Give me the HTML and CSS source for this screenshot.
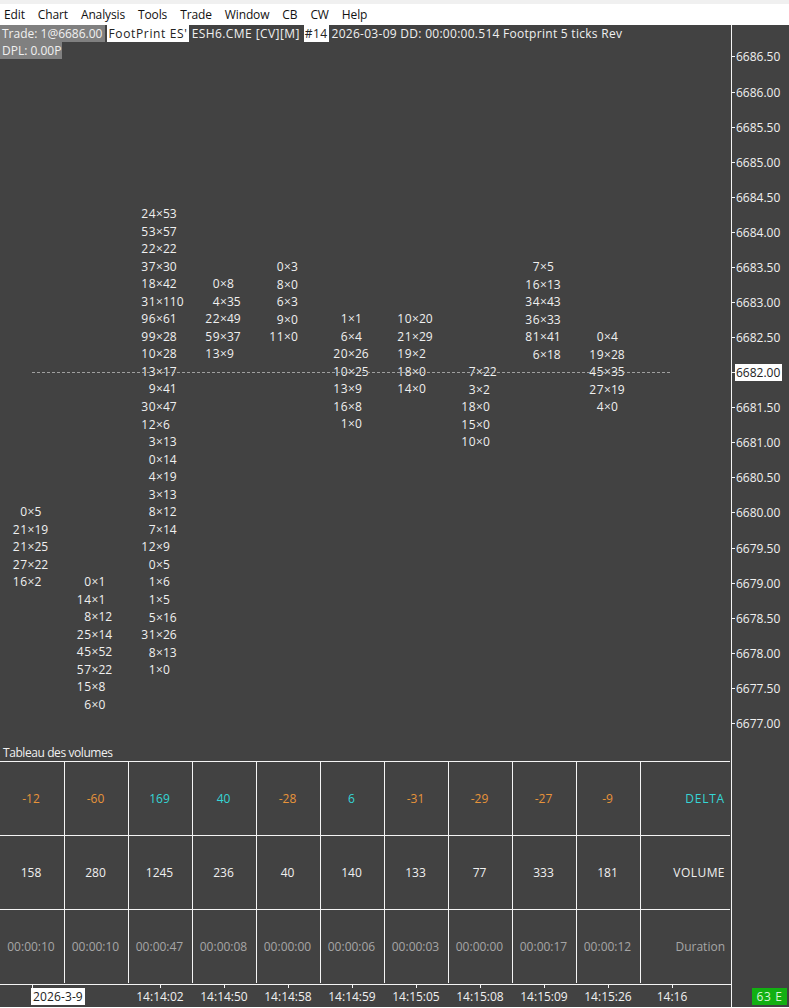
FILE: index.html
```html
<!DOCTYPE html>
<html lang="en">
<head>
<meta charset="utf-8">
<title>FootPrint ES</title>
<link rel="stylesheet" href="styles.css">
</head>
<body>
<header class="menubar">
  <span>Edit</span><span>Chart</span><span>Analysis</span><span>Tools</span><span>Trade</span><span>Window</span><span>CB</span><span>CW</span><span>Help</span>
</header>
<main class="workspace">
  <section class="plot">
    <div class="info">
      <div class="info-line">
        <span class="tag-gray">Trade: 1@6686.00</span>
        <span class="tag-white">FootPrint ES'</span>
        <span class="symbol">ESH6.CME [CV][M]</span>
        <span class="tag-white tag-num">#14</span>
        <span class="details">2026-03-09 DD: 00:00:00.514 Footprint 5 ticks Rev</span>
      </div>
      <div class="info-line"><span class="tag-gray tag-dpl">DPL: 0.00P</span></div>
    </div>
    <div class="last-price"></div>
    <div class="columns">
      <div class="col">
        <p><i>0</i>×<b>5</b></p><p><i>21</i>×<b>19</b></p><p><i>21</i>×<b>25</b></p><p><i>27</i>×<b>22</b></p><p><i>16</i>×<b>2</b></p>
      </div>
      <div class="col">
        <p><i>0</i>×<b>1</b></p><p><i>14</i>×<b>1</b></p><p><i>8</i>×<b>12</b></p><p><i>25</i>×<b>14</b></p><p><i>45</i>×<b>52</b></p><p><i>57</i>×<b>22</b></p><p><i>15</i>×<b>8</b></p><p><i>6</i>×<b>0</b></p>
      </div>
      <div class="col">
        <p><i>24</i>×<b>53</b></p><p><i>53</i>×<b>57</b></p><p><i>22</i>×<b>22</b></p><p><i>37</i>×<b>30</b></p><p><i>18</i>×<b>42</b></p><p><i>31</i>×<b>110</b></p><p><i>96</i>×<b>61</b></p><p><i>99</i>×<b>28</b></p><p><i>10</i>×<b>28</b></p><p><i>13</i>×<b>17</b></p><p><i>9</i>×<b>41</b></p><p><i>30</i>×<b>47</b></p><p><i>12</i>×<b>6</b></p><p><i>3</i>×<b>13</b></p><p><i>0</i>×<b>14</b></p><p><i>4</i>×<b>19</b></p><p><i>3</i>×<b>13</b></p><p><i>8</i>×<b>12</b></p><p><i>7</i>×<b>14</b></p><p><i>12</i>×<b>9</b></p><p><i>0</i>×<b>5</b></p><p><i>1</i>×<b>6</b></p><p><i>1</i>×<b>5</b></p><p><i>5</i>×<b>16</b></p><p><i>31</i>×<b>26</b></p><p><i>8</i>×<b>13</b></p><p><i>1</i>×<b>0</b></p>
      </div>
      <div class="col">
        <p><i>0</i>×<b>8</b></p><p><i>4</i>×<b>35</b></p><p><i>22</i>×<b>49</b></p><p><i>59</i>×<b>37</b></p><p><i>13</i>×<b>9</b></p>
      </div>
      <div class="col">
        <p><i>0</i>×<b>3</b></p><p><i>8</i>×<b>0</b></p><p><i>6</i>×<b>3</b></p><p><i>9</i>×<b>0</b></p><p><i>11</i>×<b>0</b></p>
      </div>
      <div class="col">
        <p><i>1</i>×<b>1</b></p><p><i>6</i>×<b>4</b></p><p><i>20</i>×<b>26</b></p><p><i>10</i>×<b>25</b></p><p><i>13</i>×<b>9</b></p><p><i>16</i>×<b>8</b></p><p><i>1</i>×<b>0</b></p>
      </div>
      <div class="col">
        <p><i>10</i>×<b>20</b></p><p><i>21</i>×<b>29</b></p><p><i>19</i>×<b>2</b></p><p><i>18</i>×<b>0</b></p><p><i>14</i>×<b>0</b></p>
      </div>
      <div class="col">
        <p><i>7</i>×<b>22</b></p><p><i>3</i>×<b>2</b></p><p><i>18</i>×<b>0</b></p><p><i>15</i>×<b>0</b></p><p><i>10</i>×<b>0</b></p>
      </div>
      <div class="col">
        <p><i>7</i>×<b>5</b></p><p><i>16</i>×<b>13</b></p><p><i>34</i>×<b>43</b></p><p><i>36</i>×<b>33</b></p><p><i>81</i>×<b>41</b></p><p><i>6</i>×<b>18</b></p>
      </div>
      <div class="col">
        <p><i>0</i>×<b>4</b></p><p><i>19</i>×<b>28</b></p><p><i>45</i>×<b>35</b></p><p><i>27</i>×<b>19</b></p><p><i>4</i>×<b>0</b></p>
      </div>
    </div>
    <div class="table-title">Tableau des volumes</div>
    <div class="vol-table">
      <div class="vrow delta">
        <span class="neg">-12</span><span class="neg">-60</span><span>169</span><span>40</span><span class="neg">-28</span><span>6</span><span class="neg">-31</span><span class="neg">-29</span><span class="neg">-27</span><span class="neg">-9</span><span class="name">DELTA</span>
      </div>
      <div class="vrow volume">
        <span>158</span><span>280</span><span>1245</span><span>236</span><span>40</span><span>140</span><span>133</span><span>77</span><span>333</span><span>181</span><span class="name">VOLUME</span>
      </div>
      <div class="vrow duration">
        <span>00:00:10</span><span>00:00:10</span><span>00:00:47</span><span>00:00:08</span><span>00:00:00</span><span>00:00:06</span><span>00:00:03</span><span>00:00:00</span><span>00:00:17</span><span>00:00:12</span><span class="name">Duration</span>
      </div>
    </div>
    <div class="time-axis">
      <span class="date"><em>2026-3-9</em></span><span class="no-tick"></span><span>14:14:02</span><span>14:14:50</span><span>14:14:58</span><span>14:14:59</span><span>14:15:05</span><span>14:15:08</span><span>14:15:09</span><span>14:15:26</span><span>14:16</span>
    </div>
  </section>
  <aside class="price-axis">
    <div class="prices">
      <span>6686.50</span><span>6686.00</span><span>6685.50</span><span>6685.00</span><span>6684.50</span><span>6684.00</span><span>6683.50</span><span>6683.00</span><span>6682.50</span><span><em>6682.00</em></span><span>6681.50</span><span>6681.00</span><span>6680.50</span><span>6680.00</span><span>6679.50</span><span>6679.00</span><span>6678.50</span><span>6678.00</span><span>6677.50</span><span>6677.00</span>
    </div>
    <div class="status"><span>63 E</span></div>
  </aside>
</main>
</body>
</html>
```
FILE: styles.css
```css
* { box-sizing: border-box; margin: 0; padding: 0; }
html, body { width: 789px; height: 1008px; overflow: hidden; }
body {
  display: flex;
  flex-direction: column;
  background: #fff;
  color: #f0f0f0;
  font-family: "Open Sans", "Noto Sans", sans-serif;
  font-size: 12px;
}
.menubar {
  flex: none;
  height: 25px;
  padding: 8px 0 0 4px;
  display: flex;
  gap: 13px;
  background: linear-gradient(#f0f0f0 4px, #fff 4px);
  color: #111;
  line-height: 14px;
  letter-spacing: -0.13px;
}
.workspace {
  flex: none;
  height: 982px;
  display: grid;
  grid-template-columns: 732px 57px;
  background: #424242;
}
.plot {
  position: relative;
  display: flex;
  flex-direction: column;
  border-right: 1px solid #f4f4f4;
}
.info { position: absolute; left: 0; top: 0; line-height: 17px; }
.info-line { display: flex; gap: 3px; height: 17px; white-space: nowrap; }
.tag-gray { background: #808080; padding: 0 3px 0 2px; margin-right: -1px; }
.tag-dpl { padding-right: 1px; }
.tag-white { background: #fff; color: #222; padding: 0 1px; letter-spacing: 0.65px; }
.tag-num { letter-spacing: 0.4px; margin-left: 1px; }
.symbol { letter-spacing: 0.42px; }
.details { letter-spacing: 0.28px; }
.last-price {
  position: absolute;
  left: 32px;
  top: 347px;
  width: 638px;
  border-top: 1px dashed #a0a0a0;
}
.columns { flex: none; height: 719px; display: flex; }
.col { flex: none; width: 64px; line-height: 17.55px; }
.col p { display: grid; grid-template-columns: 1fr auto 1fr; padding-right: 1px; }
.col i { font-style: normal; text-align: right; letter-spacing: 0.5px; }
.col b { font-weight: normal; text-align: left; }
.col:nth-child(1) { padding-top: 478px; }
.col:nth-child(2) { padding-top: 548px; }
.col:nth-child(-n+2) p { padding-right: 2px; }
.col:nth-child(3) { padding-top: 180px; }
.col:nth-child(4) { padding-top: 250px; }
.col:nth-child(5) { padding-top: 233px; }
.col:nth-child(6) { padding-top: 285px; }
.col:nth-child(7) { padding-top: 285px; }
.col:nth-child(8) { padding-top: 338px; }
.col:nth-child(9) { padding-top: 233px; }
.col:nth-child(10) { padding-top: 303px; }
.table-title { flex: none; height: 17px; padding-left: 3px; line-height: 18px; letter-spacing: -0.42px; }
.vol-table { flex: none; height: 224px; border-bottom: 1px solid #f4f4f4; }
.vrow {
  height: 74px;
  display: grid;
  grid-template-columns: repeat(10, 64px) 1fr;
  border-top: 1px solid #f4f4f4;
  margin-right: 1px;
}
.vrow span {
  display: flex;
  align-items: center;
  justify-content: center;
  border-left: 1px solid #f4f4f4;
  padding-right: 2px;
}
.vrow span:first-child { border-left: 0; }
.vrow .name { justify-content: flex-end; padding-right: 5px; }
.delta { color: #35d6d6; }
.delta .neg { color: #e8943a; }
.delta .name { letter-spacing: 0.8px; }
.volume .name { letter-spacing: 0.45px; }
.duration { color: #a6a6a6; }
.time-axis {
  flex: none;
  height: 22px;
  display: grid;
  grid-template-columns: repeat(11, 64px);
  line-height: 17px;
}
.time-axis span {
  padding-top: 3px;
  text-align: center;
  white-space: nowrap;
  background: linear-gradient(#f4f4f4, #f4f4f4) center top / 1px 3px no-repeat;
}
.time-axis .no-tick { background: none; }
.time-axis .date { text-align: left; padding-left: 31px; background-position: 32px 0; }
.date em {
  display: inline-block;
  height: 17px;
  font-style: normal;
  background: #fff;
  color: #222;
  padding: 0 2px;
  letter-spacing: 0.12px;
}
.price-axis { display: flex; flex-direction: column; justify-content: space-between; }
.prices { display: flex; flex-direction: column; padding-top: 14.4px; }
.prices span {
  display: flex;
  align-items: center;
  height: 35.08px;
  padding-left: 4px;
  background: linear-gradient(#f4f4f4, #f4f4f4) left center / 3px 1px no-repeat;
}
.prices em {
  font-style: normal;
  margin-left: -1px;
  padding: 0 2px 0 1px;
  line-height: 17px;
  background: #fff;
  color: #222;
}
.status { padding: 0 2px 2px 20px; line-height: 17px; }
.status span {
  display: block;
  background: #12b012;
  color: #d8f4d8;
  text-align: center;
  letter-spacing: 0.6px;
}
```
